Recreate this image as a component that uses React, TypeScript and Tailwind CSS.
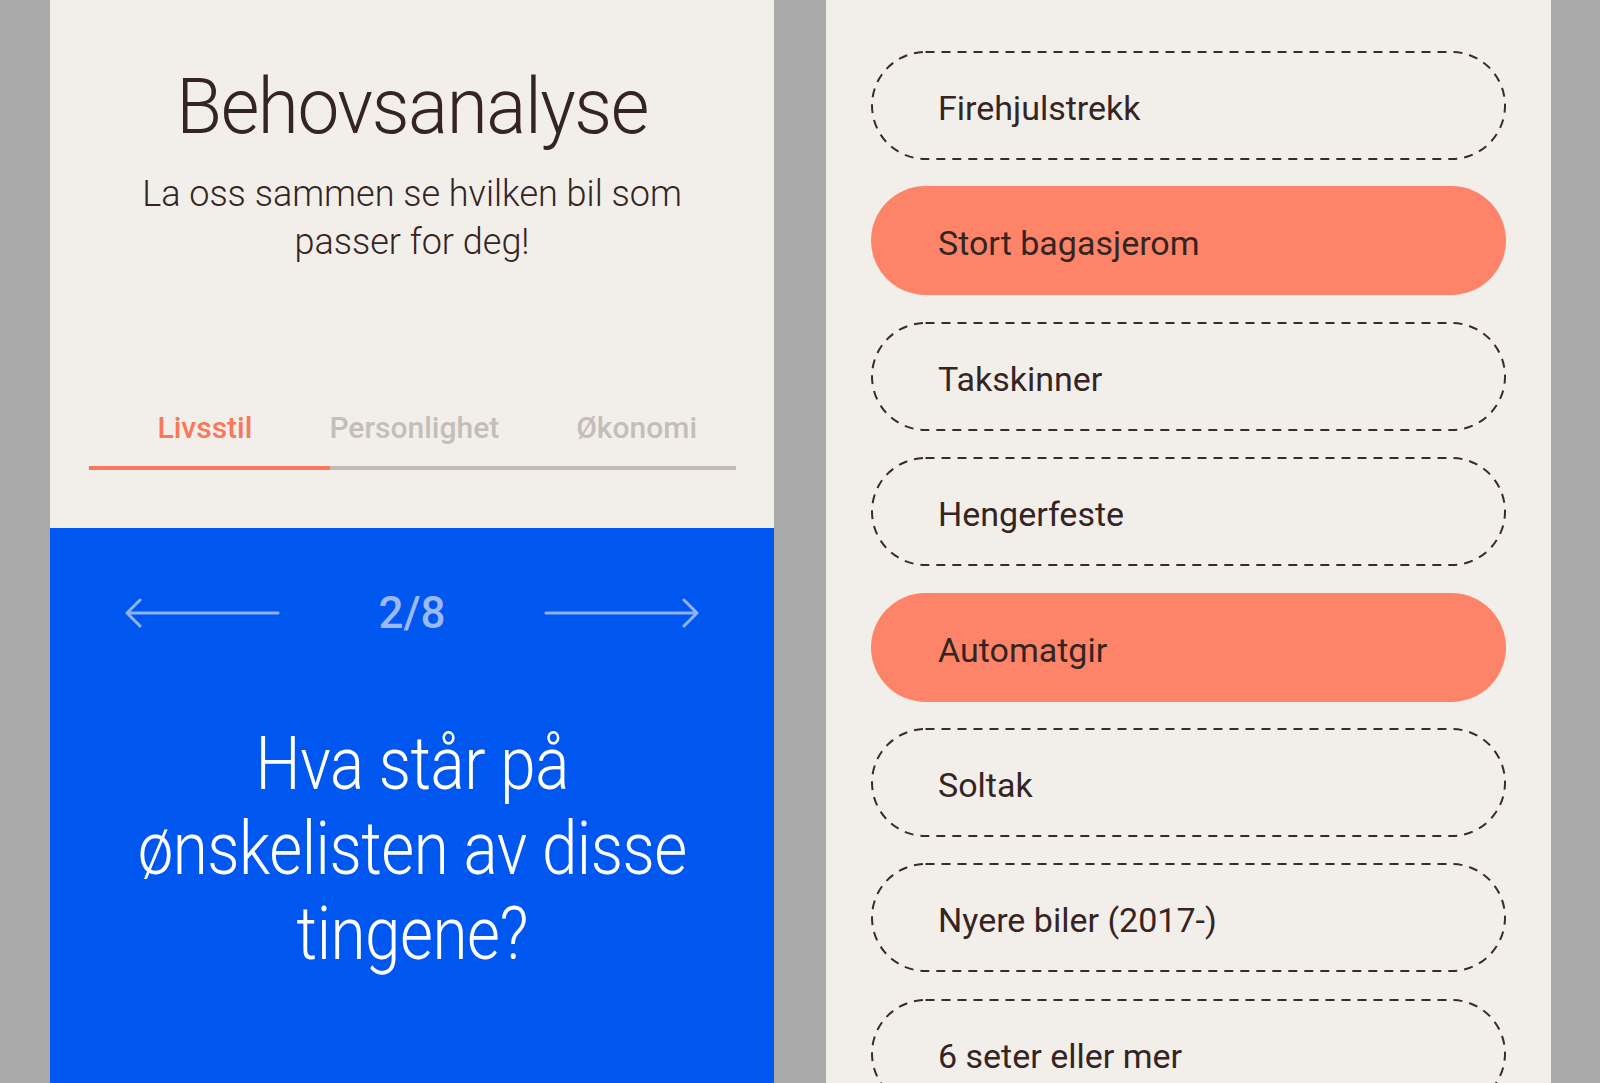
import React from 'react';

const options = [
    { label: 'Firehjulstrekk', active: false },
    { label: 'Stort bagasjerom', active: true },
    { label: 'Takskinner', active: false },
    { label: 'Hengerfeste', active: false },
    { label: 'Automatgir', active: true },
    { label: 'Soltak', active: false },
    { label: 'Nyere biler (2017-)', active: false },
    { label: '6 seter eller mer', active: false },
];

const font = { fontFamily: 'Roboto, "Liberation Sans", sans-serif' };

const Arrow: React.FC<{ dir: 'left' | 'right' }> = ({ dir }) => (
    <svg width="156" height="30" viewBox="0 0 156 30" fill="none" className={dir === 'left' ? '' : 'rotate-180'}>
        <path d="M3 15 H154 M3 15 L16 2 M3 15 L16 28" stroke="#8fb1f6" strokeWidth="3" strokeLinecap="round" />
    </svg>
);

const App: React.FC = () => {
    return (
        <div className="h-[1083px] overflow-hidden bg-[#aaaaaa] flex gap-[52px] pl-[50px] text-[#35241f]" style={font}>
            {/* Panel venstre */}
            <div className="w-[724px] h-full flex flex-col bg-[#f2efeb]">
                <div className="h-[528px] flex flex-col items-center pt-[69px]">
                    <h1 className="text-[77px] font-light leading-none tracking-[-1.5px] scale-x-[0.97]">Behovsanalyse</h1>
                    <p className="mt-[24px] text-[36px] font-light leading-[48px] text-center w-[560px]">
                        La oss sammen se hvilken bil som passer for deg!
                    </p>
                    <div className="mt-auto mb-[58px] w-[647px]">
                        <div className="flex gap-[77px] pl-[69px] text-[30px] font-medium leading-none pb-[23px]">
                            <span className="text-[#f7785c]">Livsstil</span>
                            <span className="text-[#c4beb8]">Personlighet</span>
                            <span className="text-[#c4beb8]">Økonomi</span>
                        </div>
                        <div className="h-[4px] bg-[#c0bab3] flex">
                            <div className="w-[241px] bg-[#f7785c]" />
                        </div>
                    </div>
                </div>
                <div className="flex-1 bg-[#0057f0] flex flex-col items-center">
                    <div className="mt-[63px] w-[576px] flex items-center justify-between">
                        <Arrow dir="left" />
                        <span className="text-[44px] font-medium text-[#9ab9f6] leading-none">2/8</span>
                        <Arrow dir="right" />
                    </div>
                    <p className="mt-[86px] text-white text-[74px] font-light leading-[85px] text-center tracking-[-0.5px] scale-x-[0.86] whitespace-nowrap">
                        Hva står på
                        <br />
                        ønskelisten av disse
                        <br />
                        tingene?
                    </p>
                </div>
            </div>

            {/* Panel høyre */}
            <div className="w-[725px] h-full bg-[#f2efeb] flex flex-col gap-[26.4px] px-[45px] pt-[51px]">
                {options.map((o) => (
                    <div
                        key={o.label}
                        className={
                            o.active
                                ? 'relative h-[109px] shrink-0 rounded-full bg-[#fe8469] flex items-center pl-[67px] pt-[6px] text-[34px]'
                                : 'relative h-[109px] shrink-0 rounded-full flex items-center pl-[67px] pt-[6px] text-[34px]'
                        }
                    >
                        {!o.active && (
                            <svg className="absolute inset-0" width="635" height="109" viewBox="0 0 635 109" fill="none">
                                <rect x="1" y="1" width="633" height="107" rx="53.5" stroke="#3a2b26" strokeWidth="2" strokeDasharray="9 7" />
                            </svg>
                        )}
                        <span className="relative">{o.label}</span>
                    </div>
                ))}
            </div>
        </div>
    );
};

export default App;
